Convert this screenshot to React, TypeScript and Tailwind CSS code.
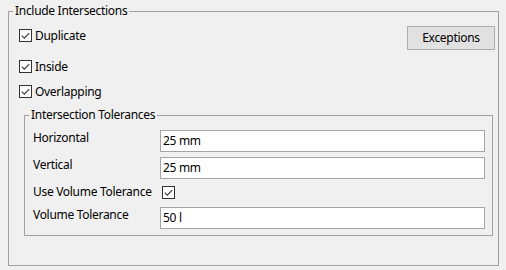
import type { ReactNode } from 'react';

function CheckBox() {
  return (
    <svg width="13" height="13" viewBox="0 0 13 13" className="shrink-0">
      <rect x="0.5" y="0.5" width="12" height="12" fill="#ffffff" stroke="#333333" />
      <path d="M2.8 6.6 L5.3 9.1 L10.2 4.1" fill="none" stroke="#333333" strokeWidth="1.1" />
    </svg>
  );
}

function CheckRow({ label, className }: { label: string; className?: string }) {
  return (
    <div className={`flex items-center gap-[3px] h-[13px] ${className ?? ''}`}>
      <CheckBox />
      <span className="leading-[16px]">{label}</span>
    </div>
  );
}

function FieldRow({ label, children, className }: { label: string; children: ReactNode; className?: string }) {
  return (
    <div className={`flex items-start ${className ?? ''}`}>
      <span className="w-[127px] shrink-0 leading-[16px]">{label}</span>
      {children}
    </div>
  );
}

function TextBox({ value }: { value: string }) {
  return (
    <div className="flex-1 h-[22px] border border-[#a5a5a5] bg-white pl-[2px] flex items-center leading-[16px]">
      {value}
    </div>
  );
}

export default function App() {
  return (
    <div
      className="w-[506px] h-[270px] bg-[#f0f0f0] text-[12px] tracking-[-0.3px] text-black pt-[3px] pl-[8px]"
      style={{ fontFamily: '"Noto Sans", "Open Sans", sans-serif' }}
    >
      {/* Include Intersections */}
      <fieldset className="w-[491px] h-[263px] border border-[#a0a0a0]">
        <legend className="ml-[4px] px-[2px] leading-[16px]">Include Intersections</legend>

        <div className="pl-[10px] pr-[3px]">
          <div className="flex items-start justify-between">
            <CheckRow label="Duplicate" className="mt-[10px]" />
            <button className="mt-[7px] w-[88px] h-[24px] bg-[#e1e1e1] border border-[#adadad] leading-[16px]">
              Exceptions
            </button>
          </div>
          <CheckRow label="Inside" className="mt-[10px]" />
          <CheckRow label="Overlapping" className="mt-[12px]" />

          {/* Intersection Tolerances */}
          <fieldset className="mt-[9px] ml-[5px] mr-[2px] h-[129px] border border-[#a0a0a0]">
            <legend className="ml-[4px] px-[2px] leading-[16px]">Intersection Tolerances</legend>
            <div className="pl-[8px] pr-[7px]">
              <FieldRow label="Horizontal" className="mt-[7px]">
                <TextBox value="25 mm" />
              </FieldRow>
              <FieldRow label="Vertical" className="mt-[5px]">
                <TextBox value="25 mm" />
              </FieldRow>
              <FieldRow label="Use Volume Tolerance" className="mt-[5px] h-[23px]">
                <div className="pl-[2px] pt-[2px]">
                  <CheckBox />
                </div>
              </FieldRow>
              <FieldRow label="Volume Tolerance">
                <TextBox value="50 l" />
              </FieldRow>
            </div>
          </fieldset>
        </div>
      </fieldset>
    </div>
  );
}
